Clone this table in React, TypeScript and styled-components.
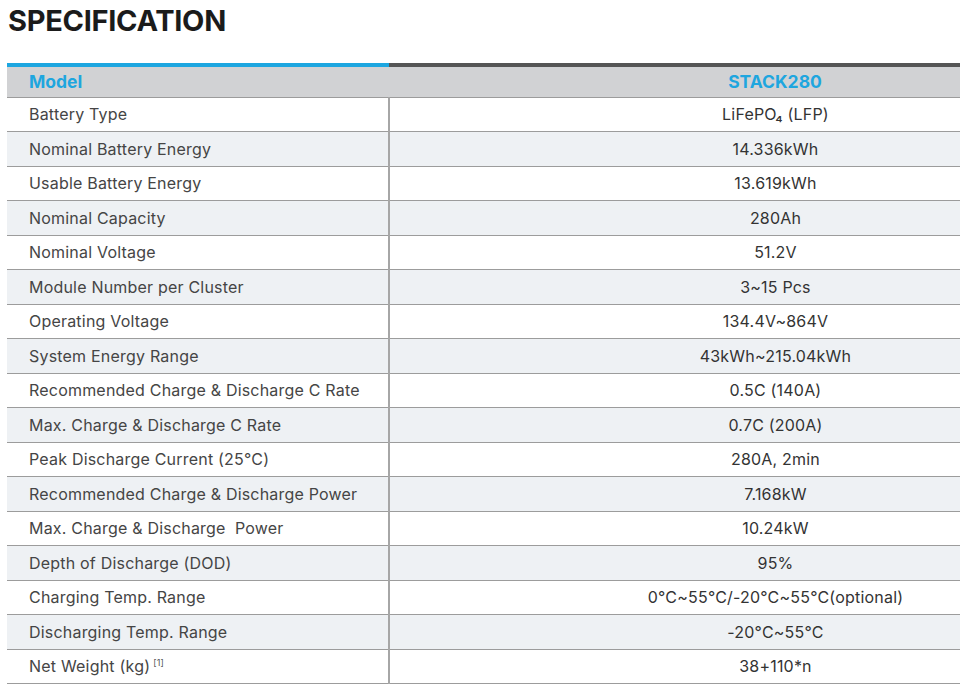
import styled, { createGlobalStyle } from "styled-components";

const GlobalStyle = createGlobalStyle`
  html, body {
    margin: 0;
    padding: 0;
    background: #ffffff;
  }
  body {
    font-family: Inter, "Liberation Sans", sans-serif;
  }
`;

type Spec = { label: string; value: string; note?: string };

const specs: Spec[] = [
  { label: "Battery Type", value: "LiFePO₄ (LFP)" },
  { label: "Nominal Battery Energy", value: "14.336kWh" },
  { label: "Usable Battery Energy", value: "13.619kWh" },
  { label: "Nominal Capacity", value: "280Ah" },
  { label: "Nominal Voltage", value: "51.2V" },
  { label: "Module Number per Cluster", value: "3~15 Pcs" },
  { label: "Operating Voltage", value: "134.4V~864V" },
  { label: "System Energy Range", value: "43kWh~215.04kWh" },
  { label: "Recommended Charge & Discharge C Rate", value: "0.5C (140A)" },
  { label: "Max. Charge & Discharge C Rate", value: "0.7C (200A)" },
  { label: "Peak Discharge Current (25°C)", value: "280A, 2min" },
  { label: "Recommended Charge & Discharge Power", value: "7.168kW" },
  { label: "Max. Charge & Discharge  Power", value: "10.24kW" },
  { label: "Depth of Discharge (DOD)", value: "95%" },
  { label: "Charging Temp. Range", value: "0°C~55°C/-20°C~55°C(optional)" },
  { label: "Discharging Temp. Range", value: "-20°C~55°C" },
  { label: "Net Weight (kg)", value: "38+110*n", note: "[1]" },
];

export default function App() {
  return (
    <>
      <GlobalStyle />
      <Page>
        <Title>SPECIFICATION</Title>
        <SpecTable>
          <colgroup>
            <col style={{ width: 382 }} />
            <col />
          </colgroup>
          <thead>
            <tr>
              <HeadCell $accent="#1ca6e0">Model</HeadCell>
              <HeadCell $accent="#555555" $center>
                STACK280
              </HeadCell>
            </tr>
          </thead>
          <tbody>
            {specs.map((s, i) => (
              <Row key={s.label} $alt={i % 2 === 1}>
                <LabelCell>
                  {s.label.replace(/  /g, "\u00a0 ")}
                  {s.note && <Note>{s.note}</Note>}
                </LabelCell>
                <ValueCell>{s.value}</ValueCell>
              </Row>
            ))}
          </tbody>
        </SpecTable>
      </Page>
    </>
  );
}

const Page = styled.div`
  width: 960px;
  height: 685px;
  overflow: hidden;
  padding: 0 0 0 7px;
  box-sizing: border-box;
`;

const Title = styled.h1`
  margin: 0;
  padding: 3px 0 0 1px;
  height: 63px;
  box-sizing: border-box;
  font-size: 29px;
  font-weight: 700;
  letter-spacing: -0.3px;
  color: #1b1b1b;
`;

const SpecTable = styled.table`
  width: 1154px;
  table-layout: fixed;
  border-collapse: collapse;
  font-size: 16px;
  letter-spacing: 0.2px;
`;

const HeadCell = styled.th<{ $accent: string; $center?: boolean }>`
  height: 32px;
  padding: 0 0 0 22px;
  box-sizing: border-box;
  background: #d1d2d4;
  border-top: 4px solid ${(p) => p.$accent};
  border-bottom: 1px solid #9c9c9c;
  color: #1ea6df;
  font-size: 17.5px;
  font-weight: 700;
  letter-spacing: 0;
  text-align: ${(p) => (p.$center ? "center" : "left")};
  ${(p) => (p.$center ? "padding: 0;" : "")}
`;

const Row = styled.tr<{ $alt: boolean }>`
  height: 34.5px;
  background: ${(p) => (p.$alt ? "#eef1f4" : "#ffffff")};
  border-bottom: 1px solid #9c9c9c;
`;

const LabelCell = styled.td`
  padding: 0 0 0 22px;
  color: #454545;
  border-right: 2px solid #a6a6a6;
  white-space: nowrap;
`;

const ValueCell = styled.td`
  padding: 0;
  text-align: center;
  color: #333333;
`;

const Note = styled.sup`
  font-size: 9px;
  margin-left: 3px;
  vertical-align: 6px;
  color: #555555;
`;
